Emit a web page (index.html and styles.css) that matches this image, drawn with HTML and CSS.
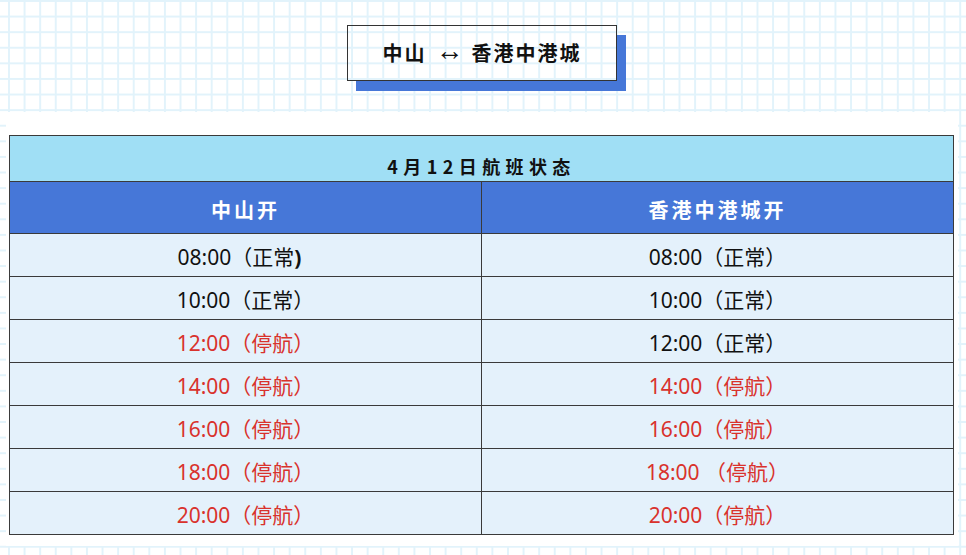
FILE: index.html
```html
<!DOCTYPE html>
<html lang="zh-CN">
<head>
<meta charset="utf-8">
<title>中山 ↔ 香港中港城</title>
<link rel="stylesheet" href="styles.css">
</head>
<body>
<div class="page">
  <header class="hero">
    <h1 class="route"><span class="route-text">中山<span class="arrow">↔</span>香港中港城</span></h1>
  </header>
  <section class="panel">
    <table class="sched">
      <thead>
        <tr><th colspan="2" class="date">4月12日航班状态</th></tr>
        <tr><th class="col">中山开</th><th class="col">香港中港城开</th></tr>
      </thead>
      <tbody>
        <tr><td>08:00（正常<b class="paren">)</b></td><td>08:00（正常）</td></tr>
        <tr><td>10:00（正常）</td><td>10:00（正常）</td></tr>
        <tr><td class="stop">12:00（停航）</td><td>12:00（正常）</td></tr>
        <tr><td class="stop">14:00（停航）</td><td class="stop">14:00（停航）</td></tr>
        <tr><td class="stop">16:00（停航）</td><td class="stop">16:00（停航）</td></tr>
        <tr><td class="stop">18:00（停航）</td><td class="stop">18:00 （停航）</td></tr>
        <tr><td class="stop">20:00（停航）</td><td class="stop">20:00（停航）</td></tr>
      </tbody>
    </table>
  </section>
</div>
</body>
</html>
```
FILE: styles.css
```css
html, body {
  margin: 0;
  padding: 0;
}
body {
  width: 966px;
  height: 555px;
  overflow: hidden;
  background-color: #ffffff;
  background-image:
    linear-gradient(to right, #e2f3fb 2px, transparent 2px),
    linear-gradient(to bottom, #e2f3fb 2px, transparent 2px);
  background-size: 15.6px 15.6px;
  background-position: 8px 0;
  font-family: "Noto Sans", "Noto Sans CJK SC", sans-serif;
  color: #111;
}
.page {
  display: flex;
  flex-direction: column;
  padding: 0 8px 0 6px;
}
.hero {
  height: 112px;
  display: flex;
  justify-content: center;
  align-items: flex-start;
}
.route {
  margin: 25px 0 0;
  width: 268px;
  height: 54px;
  border: 1px solid #333;
  box-shadow: 9px 10px 0 #4677d8;
  display: flex;
  align-items: center;
  justify-content: center;
  font-family: "Noto Sans CJK SC", sans-serif;
  font-size: 20px;
  font-weight: 700;
  color: #111;
}
.route-text {
  letter-spacing: 2px;
  line-height: 24px;
  padding-left: 0;
}
.arrow {
  display: inline-block;
  font-family: "Liberation Sans", "DejaVu Sans", sans-serif;
  font-weight: 400;
  font-size: 28px;
  line-height: 20px;
  letter-spacing: 0;
  vertical-align: 1px;
  margin: 0 8px 0 9px;
}
.panel {
  background: #fff;
  padding: 23px 5px 11px 3px;
}
.sched {
  width: 945px;
  border-collapse: collapse;
  table-layout: fixed;
}
.sched th, .sched td {
  border: 1px solid #3a3a3a;
  text-align: center;
  padding: 0;
}
.date {
  background: #a0dff5;
  height: 46px;
  padding-top: 14px !important;
  box-sizing: border-box;
  font-family: "Noto Sans CJK SC", sans-serif;
  font-size: 18px;
  font-weight: 700;
  letter-spacing: 5.4px;
  color: #111;
  line-height: 20px;
}
.col {
  background: #4677d8;
  color: #fff;
  height: 52px;
  font-family: "Noto Sans CJK SC", sans-serif;
  font-size: 20px;
  font-weight: 700;
  letter-spacing: 3px;
  padding-top: 4px !important;
  box-sizing: border-box;
}
.sched td {
  background: #e4f1fb;
  height: 43px;
  font-size: 21px;
  line-height: 24px;
  padding-top: 3px;
  box-sizing: border-box;
  color: #111;
}
.sched td.stop {
  color: #d9322c;
}
.paren {
  margin-right: 12px;
}
```
